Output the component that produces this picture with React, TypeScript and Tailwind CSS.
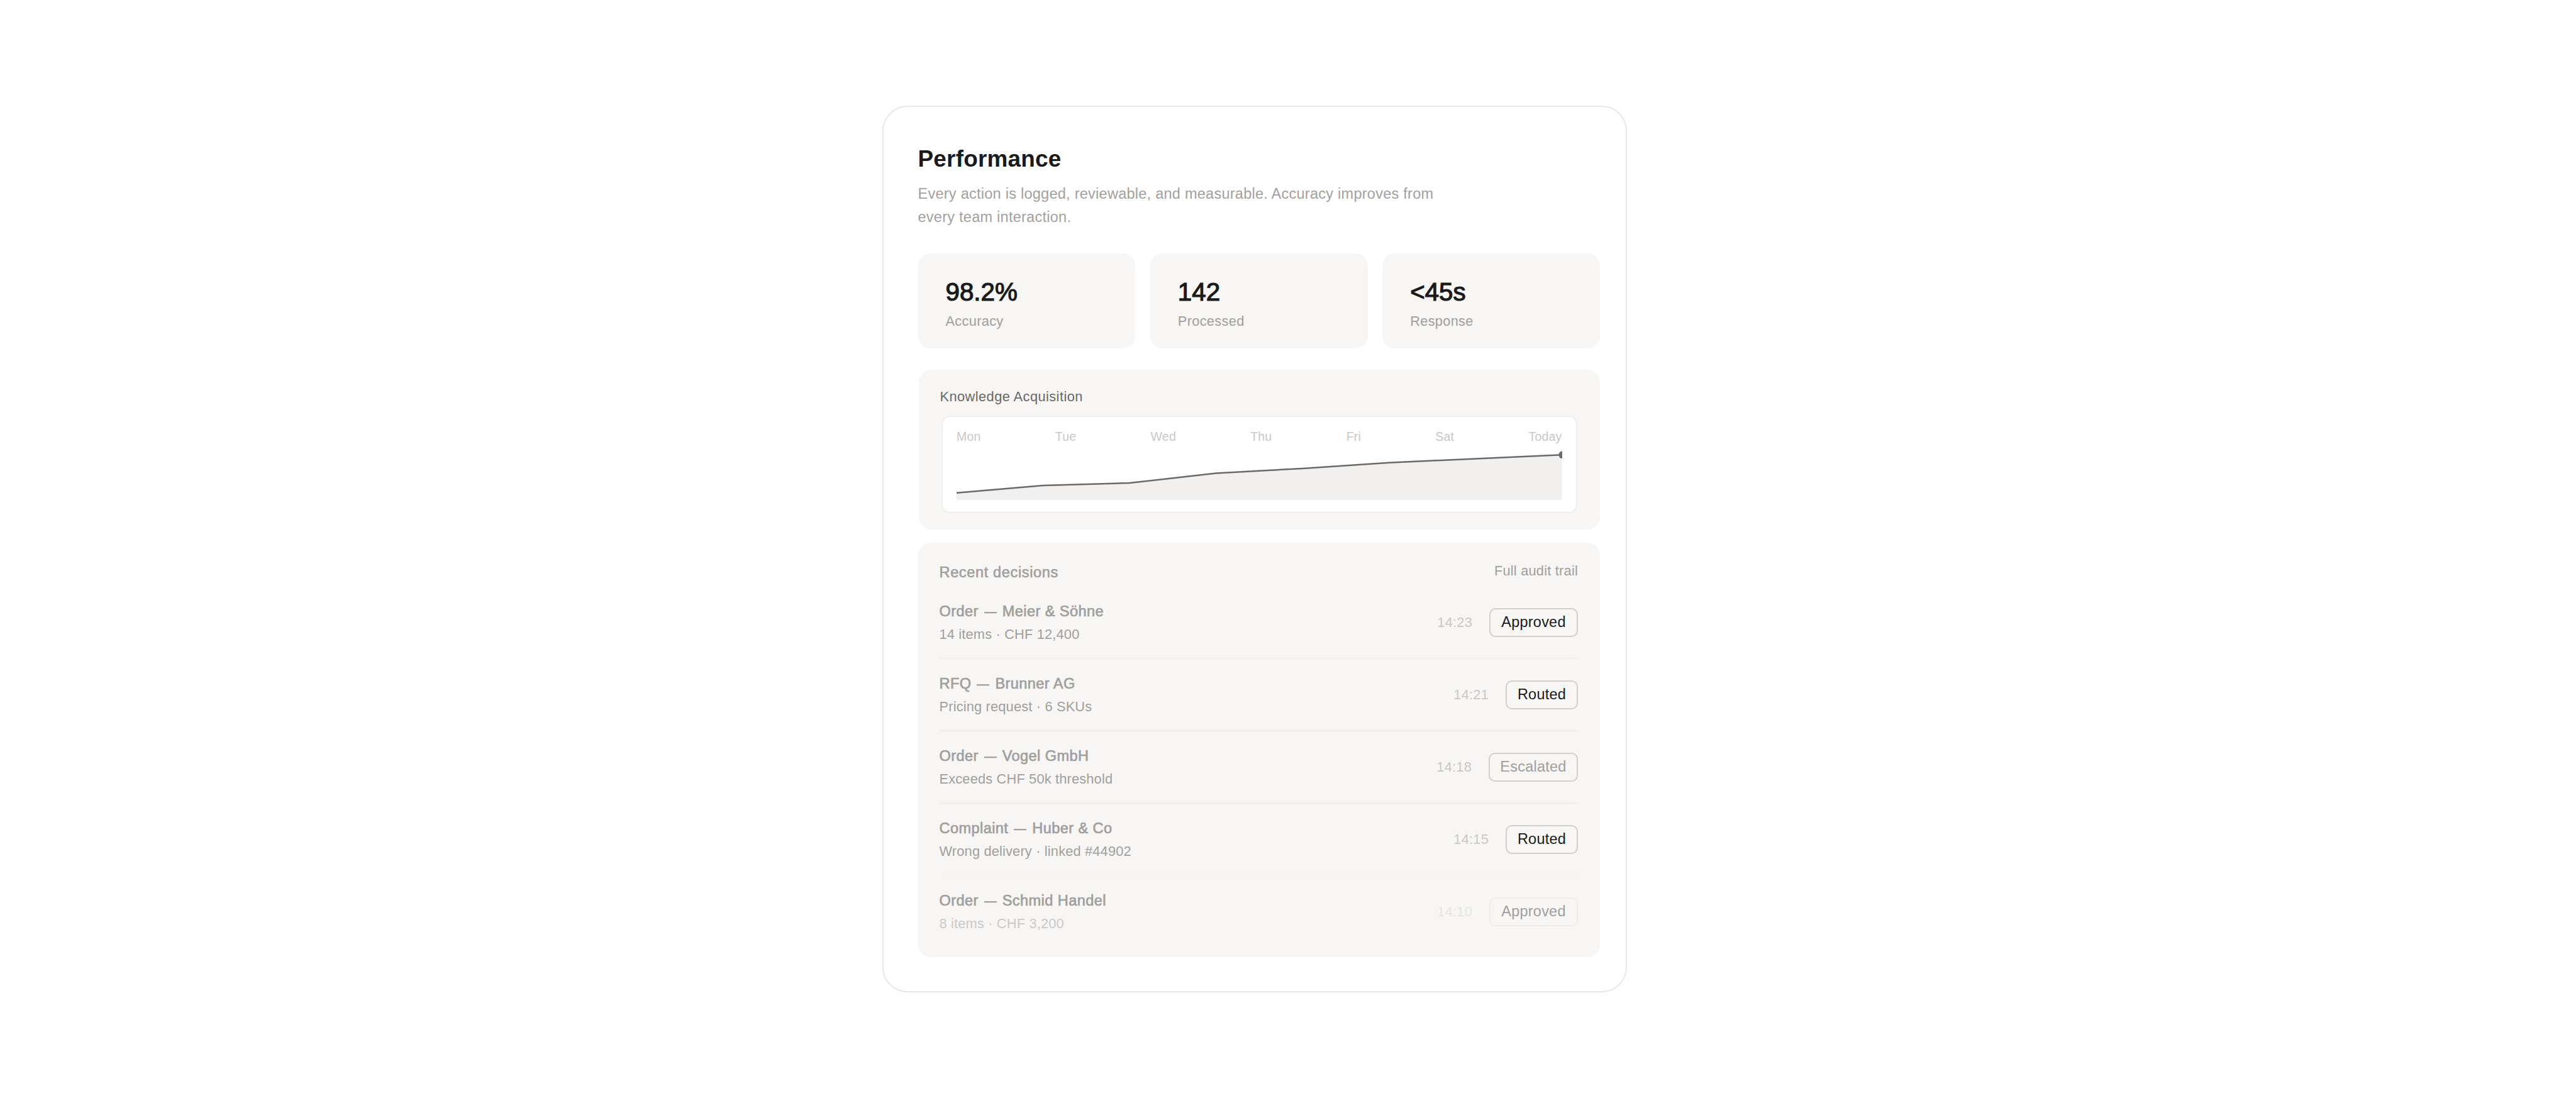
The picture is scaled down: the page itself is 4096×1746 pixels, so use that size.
import clsx from 'clsx';

type Status = 'Approved' | 'Routed' | 'Escalated';

type Decision = {
  kind: string;
  party: string;
  detail: string;
  time: string;
  status: Status;
  faded?: boolean;
};

const stats = [
  { value: '98.2%', label: 'Accuracy' },
  { value: '142', label: 'Processed' },
  { value: '<45s', label: 'Response' },
];

const days = ['Mon', 'Tue', 'Wed', 'Thu', 'Fri', 'Sat', 'Today'];

const CHART_WIDTH = 962;
const CHART_HEIGHT = 84;
const trend = [72.8, 61, 57.1, 41.5, 33.9, 24.7, 18.5, 12.3];

const decisions: Decision[] = [
  { kind: 'Order', party: 'Meier & Söhne', detail: '14 items · CHF 12,400', time: '14:23', status: 'Approved' },
  { kind: 'RFQ', party: 'Brunner AG', detail: 'Pricing request · 6 SKUs', time: '14:21', status: 'Routed' },
  { kind: 'Order', party: 'Vogel GmbH', detail: 'Exceeds CHF 50k threshold', time: '14:18', status: 'Escalated' },
  { kind: 'Complaint', party: 'Huber & Co', detail: 'Wrong delivery · linked #44902', time: '14:15', status: 'Routed' },
  { kind: 'Order', party: 'Schmid Handel', detail: '8 items · CHF 3,200', time: '14:10', status: 'Approved', faded: true },
];

const badgeWidths: Record<Status, string> = {
  Approved: 'w-[141px]',
  Routed: 'w-[115px]',
  Escalated: 'w-[142px]',
};

const dividers = ['border-[#efeeec]', 'border-[#efeeec]', 'border-[#efeeec]', 'border-[#f4f3f1]', 'border-transparent'];

function TrendChart() {
  const step = CHART_WIDTH / (trend.length - 1);
  const points = trend.map((y, index) => `${(index * step).toFixed(1)},${y}`).join(' ');

  return (
    <svg
      className="block h-[84px] w-full overflow-hidden"
      viewBox={`0 0 ${CHART_WIDTH} ${CHART_HEIGHT}`}
      preserveAspectRatio="none"
    >
      <polygon points={`0,${CHART_HEIGHT} ${points} ${CHART_WIDTH},${CHART_HEIGHT}`} fill="#f1f0ee" />
      <polyline points={points} fill="none" stroke="#6b6967" strokeWidth="2.5" strokeLinejoin="round" />
      <ellipse cx={CHART_WIDTH} cy={trend[trend.length - 1]} rx="5" ry="5.8" fill="#6b6967" />
    </svg>
  );
}

function DecisionRow({ decision, divider }: { decision: Decision; divider: string }) {
  const { kind, party, detail, time, status, faded } = decision;

  return (
    <li className={clsx('flex h-[115px] items-start justify-between border-b-2', divider)}>
      <div className="pt-[21px]">
        <p className="text-[23.5px] leading-[37px] tracking-[0.019em] text-[#a09f9d] [-webkit-text-stroke:0.7px_#a09f9d]">
          {kind} <span className="inline-block scale-x-[0.82]">—</span> {party}
        </p>
        <p className={clsx('text-[21.8px] leading-[36px] tracking-[0.008em]', faded ? 'text-[#cbcac8]' : 'text-[#a09f9d]')}>
          {detail}
        </p>
      </div>
      <div className="flex items-center gap-[27px] pt-[34px]">
        <span className={clsx('text-[21.8px] leading-[46px] tracking-[0.01em]', faded ? 'text-[#e6e5e3]' : 'text-[#c9c8c6]')}>
          {time}
        </span>
        <span
          className={clsx(
            'flex h-[46px] items-center justify-center rounded-[10px] border-2 text-[23.5px] leading-none tracking-[0.01em]',
            badgeWidths[status],
            faded ? 'border-[#efeeec]' : 'border-[#d0cfcd]',
            faded || status === 'Escalated' ? 'text-[#a09f9d]' : 'text-[#1a1a1a]',
          )}
        >
          {status}
        </span>
      </div>
    </li>
  );
}

export default function App() {
  return (
    <main className="h-[1746px] w-[4096px] overflow-hidden bg-white pt-[168px] pl-[1403px] font-['Liberation_Sans',Arial,sans-serif]">
      <section className="h-[1410px] w-[1184px] rounded-[40px] border-2 border-[#e8e8e7] bg-white pt-[60px] pr-[41px] pl-[54.5px] shadow-[0_4px_32px_rgba(0,0,0,0.015)]">
        <h1 className="text-[36.9px] leading-[46px] font-bold tracking-[0.006em] text-[#1a1a1a]">Performance</h1>
        <p className="mt-[14px] w-[860px] text-[23.5px] leading-[37px] tracking-[0.011em] text-[#a3a09d]">
          Every action is logged, reviewable, and measurable. Accuracy improves from every team interaction.
        </p>

        <div className="mt-[39px] grid grid-cols-3 gap-[23.5px]">
          {stats.map((stat) => (
            <div key={stat.label} className="h-[151px] rounded-[20px] bg-[#f7f6f4] pt-[38px] pl-[44px]">
              <p className="text-[40.3px] leading-[48px] text-[#1a1a1a] [-webkit-text-stroke:1.2px_#1a1a1a]">{stat.value}</p>
              <p className="mt-[8px] text-[21.8px] leading-[28px] tracking-[0.014em] text-[#a09f9d]">{stat.label}</p>
            </div>
          ))}
        </div>

        <div className="mt-[34px] ml-px h-[254px] rounded-[20px] bg-[#f7f6f4] px-[36px] pt-[28px]">
          <h2 className="-ml-[2px] text-[21.8px] leading-[30px] tracking-[0.02em] text-[#6b6967]">Knowledge Acquisition</h2>
          <div className="mt-[15px] h-[155px] rounded-[14px] border-2 border-[#f0efed] bg-white px-[22.5px] pt-[19px]">
            <div className="flex justify-between text-[19.5px] leading-[24px] tracking-[0.01em] text-[#c9c8c6]">
              {days.map((day) => (
                <span key={day}>{day}</span>
              ))}
            </div>
            <div className="mt-[5px]">
              <TrendChart />
            </div>
          </div>
        </div>

        <div className="mt-[21px] h-[659px] rounded-[20px] bg-[#f7f6f4] pt-[30px] pr-[35px] pl-[34px]">
          <div className="flex h-[40px] items-start justify-between">
            <h2 className="text-[23.5px] leading-[34px] tracking-[0.028em] text-[#a09f9d] [-webkit-text-stroke:0.6px_#a09f9d]">Recent decisions</h2>
            <span className="text-[21.8px] leading-[30px] tracking-[0.01em] text-[#a09f9d]">Full audit trail</span>
          </div>
          <ul>
            {decisions.map((decision, index) => (
              <DecisionRow key={decision.time} decision={decision} divider={dividers[index]} />
            ))}
          </ul>
        </div>
      </section>
    </main>
  );
}
